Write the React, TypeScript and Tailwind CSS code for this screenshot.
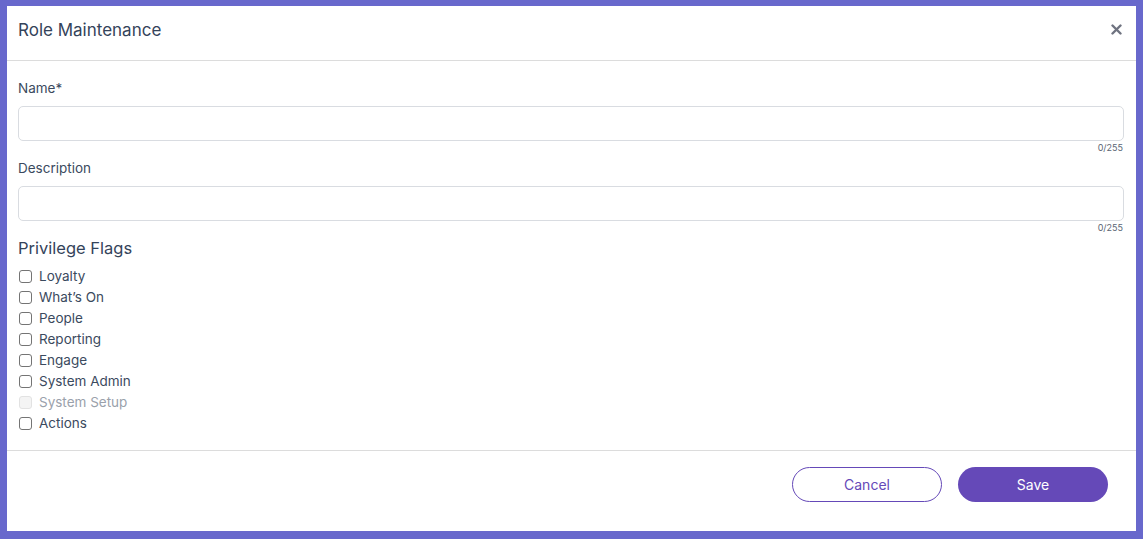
import React from "react";

const flags = [
  { label: "Loyalty" },
  { label: "What’s On" },
  { label: "People" },
  { label: "Reporting" },
  { label: "Engage" },
  { label: "System Admin" },
  { label: "System Setup", disabled: true },
  { label: "Actions" },
];

const Field = ({ label }: { label: string }) => (
  <div className="flex flex-col">
    <label className="text-[13.5px] leading-5 text-[#3b4a5e]">{label}</label>
    <input
      className="mt-2 h-[35px] w-full rounded-[5px] border border-[#d9dce1] bg-white px-3 text-[14px] outline-none"
      type="text"
    />
    <div className="mt-[1px] self-end pr-[1px] text-[9px] leading-3 text-[#5b6573]">
      0/255
    </div>
  </div>
);

export default function App() {
  return (
    <div
      className="h-[539px] w-[1143px] bg-[#6868cc] pt-[6px] pl-[7px] pr-[7px] pb-[8px]"
      style={{ fontFamily: "Inter, 'Liberation Sans', sans-serif" }}
    >
      <div className="flex h-full flex-col bg-white">
        {/* header */}
        <div className="flex h-[55px] items-center justify-between border-b border-[#dcdcdc] pl-[11px] pr-[14px]">
          <h1 className="pb-[6px] text-[17px] leading-6 font-normal text-[#34435a]">
            Role Maintenance
          </h1>
          <button className="mb-[7px] text-[#6f7380]">
            <svg width="11" height="11" viewBox="0 0 11 11">
              <path
                d="M1.5 1.5 L9.5 9.5 M9.5 1.5 L1.5 9.5"
                stroke="currentColor"
                strokeWidth="2.4"
                strokeLinecap="round"
              />
            </svg>
          </button>
        </div>

        {/* body */}
        <div className="flex flex-col border-b border-[#dcdcdc] pl-[11px] pr-[12px] pt-[17px] pb-[16px]">
          <Field label="Name*" />
          <div className="mt-1">
            <Field label="Description" />
          </div>
          <h2 className="mt-[2px] text-[16.5px] leading-6 font-normal text-[#34435a]">
            Privilege Flags
          </h2>
          <div className="mt-[6px] flex flex-col">
            {flags.map((f) => (
              <label
                key={f.label}
                className={`flex h-[21px] items-center gap-[7px] pl-[1px] text-[13.5px] ${
                  f.disabled ? "text-[#9aa1ab]" : "text-[#3b4a5e]"
                }`}
              >
                <span
                  className={`h-[13px] w-[13px] rounded-[3px] border ${
                    f.disabled
                      ? "border-[#e2e2e2] bg-[#f4f4f4]"
                      : "border-[#747474] bg-white"
                  }`}
                />
                {f.label}
              </label>
            ))}
          </div>
        </div>

        {/* footer */}
        <div className="flex justify-end gap-4 pt-4 pr-[28px]">
          <button className="h-[35px] w-[150px] rounded-full border border-[#6549b8] text-[14px] text-[#6549b8]">
            Cancel
          </button>
          <button className="h-[35px] w-[150px] rounded-full bg-[#6549b8] text-[14px] text-white">
            Save
          </button>
        </div>
      </div>
    </div>
  );
}
